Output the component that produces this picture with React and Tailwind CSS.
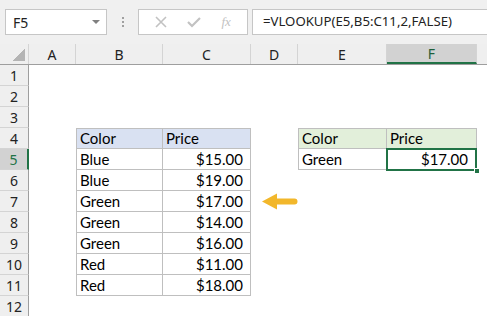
import React from "react";

const cols = [
  { key: "A", w: "w-[47px]" },
  { key: "B", w: "w-[87px]" },
  { key: "C", w: "w-[88px]" },
  { key: "D", w: "w-[47px]" },
  { key: "E", w: "w-[89px]" },
  { key: "F", w: "w-[90px]" },
];

const lookup = [
  ["Blue", "$15.00"],
  ["Blue", "$19.00"],
  ["Green", "$17.00"],
  ["Green", "$14.00"],
  ["Green", "$16.00"],
  ["Red", "$11.00"],
  ["Red", "$18.00"],
];

function Cell({ w, children, className = "", right }) {
  return (
    <div
      className={`${w} h-full shrink-0 flex items-end pb-[2px] leading-none ${
        right ? "justify-end pr-[7px]" : "pl-[3px]"
      } ${className}`}
    >
      {children}
    </div>
  );
}

function Arrow() {
  return (
    <svg width="36" height="17" viewBox="0 0 36 17">
      <path d="M0 8.5 L15 0.5 L15 5.5 L32.5 5.5 A3 3 0 0 1 32.5 11.5 L15 11.5 L15 16.5 Z" fill="#f2b72b" />
    </svg>
  );
}

function Row({ n, children, active }) {
  return (
    <div className="flex h-[21px]">
      <div
        className={`w-[29px] shrink-0 flex items-center justify-center text-[14px] border-b border-[#d4d4d4] ${
          active
            ? "bg-[#d2d2d2] text-[#217346] border-r-2 border-r-[#217346]"
            : "bg-[#efefef] text-[#222] border-r border-r-[#9e9e9e]"
        }`}
        style={{ fontFamily: "'Noto Sans', sans-serif" }}
      >
        {n}
      </div>
      <div className="flex flex-1 h-full">{children}</div>
    </div>
  );
}

export default function App() {
  const cellFont = { fontFamily: "Lato, 'Liberation Sans', sans-serif" };
  const tb = "border-r border-b border-[#bfbfbf]";

  const rows = [];
  for (let n = 1; n <= 12; n++) {
    let content = null;
    if (n === 4) {
      content = (
        <>
          <Cell w={cols[0].w} />
          <Cell w={cols[1].w} className={`${tb} border-l border-t bg-[#d9e1f2]`}>Color</Cell>
          <Cell w={cols[2].w} className={`${tb} border-t bg-[#d9e1f2]`}>Price</Cell>
          <Cell w={cols[3].w} />
          <Cell w={cols[4].w} className={`${tb} border-l border-t bg-[#e2efda]`}>Color</Cell>
          <Cell w={cols[5].w} className={`${tb} border-t bg-[#e2efda]`}>Price</Cell>
        </>
      );
    } else if (n >= 5 && n <= 11) {
      const [c, p] = lookup[n - 5];
      content = (
        <>
          <Cell w={cols[0].w} />
          <Cell w={cols[1].w} className={`${tb} border-l`}>{c}</Cell>
          <Cell w={cols[2].w} className={tb} right>{p}</Cell>
          <div className="w-[47px] shrink-0 h-full flex items-center justify-end">
            {n === 7 && <Arrow />}
          </div>
          {n === 5 && (
            <>
              <Cell w={cols[4].w} className={`${tb} border-l`}>Green</Cell>
              <div className="relative w-[90px] shrink-0 h-full">
                <div className="absolute -left-px -top-px right-0 bottom-[-1px] border-2 border-[#217346] flex items-end justify-end pr-[7px] pb-[2px] leading-none">
                  $17.00
                </div>
                <div className="absolute right-[-3px] bottom-[-4px] w-[6px] h-[6px] bg-[#217346] border border-white" />
              </div>
            </>
          )}
        </>
      );
    }
    rows.push(
      <Row key={n} n={n} active={n === 5}>
        {content}
      </Row>
    );
  }

  return (
    <div className="w-[487px] h-[316px] overflow-hidden bg-white select-none">
      {/* formula bar */}
      <div
        className="h-[44px] bg-[#f0f0f0] flex items-start pt-[9px] pl-[5px]"
        style={{ fontFamily: "'Noto Sans', sans-serif" }}
      >
        <div className="w-[102px] h-[26px] bg-white border border-[#c6c6c6] flex items-center justify-between pl-[7px] pr-[6px] text-[14px] text-[#222]">
          <span>F5</span>
          <span className="w-0 h-0 border-l-[4px] border-r-[4px] border-t-[4px] border-l-transparent border-r-transparent border-t-[#808080]" />
        </div>
        <div className="w-[31px] h-[26px] flex flex-col items-center justify-center gap-[2px]">
          <span className="w-[2px] h-[2px] bg-[#a0a0a0]" />
          <span className="w-[2px] h-[2px] bg-[#a0a0a0]" />
          <span className="w-[2px] h-[2px] bg-[#a0a0a0]" />
        </div>
        <div className="w-[110px] h-[26px] bg-white border border-[#c6c6c6] flex items-center justify-around px-[6px]">
          <svg width="12" height="12" viewBox="0 0 12 12">
            <path d="M1 1 L11 11 M11 1 L1 11" stroke="#c2c2c2" strokeWidth="1.6" />
          </svg>
          <svg width="14" height="12" viewBox="0 0 14 12">
            <path d="M1 6 L5 10 L13 2" stroke="#c2c2c2" strokeWidth="2.2" fill="none" />
          </svg>
          <span className="text-[#c2c2c2] italic text-[13px]" style={{ fontFamily: "'Liberation Serif', serif" }}>
            fx
          </span>
        </div>
        <div className="ml-[4px] flex-1 h-[26px] bg-white border border-[#c6c6c6] border-r-0 flex items-center pl-[10px] text-[13.2px] text-[#222]">
          =VLOOKUP(E5,B5:C11,2,FALSE)
        </div>
      </div>

      {/* column headers */}
      <div
        className="flex h-[21px] border-b border-[#9e9e9e] bg-[#efefef] text-[14px] text-[#222]"
        style={{ fontFamily: "'Noto Sans', sans-serif" }}
      >
        <div className="w-[29px] shrink-0 border-r border-[#d4d4d4] flex items-end justify-end pr-[3px] pb-[3px]">
          <span className="w-[13px] h-[13px] bg-[linear-gradient(135deg,transparent_50%,#b4b4b4_50%)]" />
        </div>
        {cols.map((c) => (
          <div
            key={c.key}
            className={`${c.w} shrink-0 flex items-center justify-center border-r border-[#d4d4d4] ${
              c.key === "F" ? "bg-[#d2d2d2] text-[#1e5f3a] border-b-2 border-b-[#217346]" : ""
            }`}
          >
            {c.key}
          </div>
        ))}
        <div className="flex-1" />
      </div>

      <div className="text-[15px] text-black" style={cellFont}>
        {rows}
      </div>
    </div>
  );
}
